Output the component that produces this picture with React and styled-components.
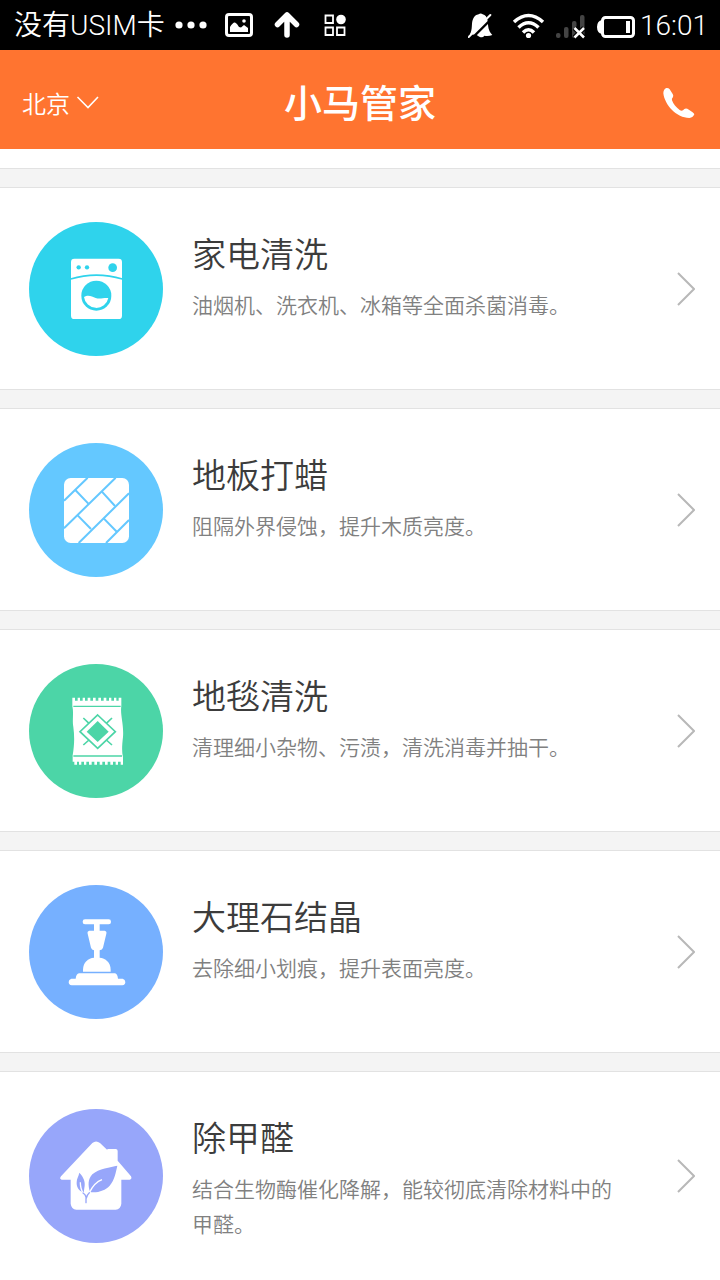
import React from 'react'
import styled, { createGlobalStyle, ThemeProvider } from 'styled-components'

const theme = {
  colors: {
    main: '#ff7430',
    white: '#ffffff',
    background: '#f4f4f4',
    border: '#e2e2e2',
    title: '#3c3c3c',
    text: '#808080',
    arrow: '#b8b8b8',
  },
  fontWeights: {
    light: 350,
    medium: 500,
  },
}

const GlobalStyle = createGlobalStyle`
  * {
    box-sizing: border-box;
  }

  body {
    margin: 0;
    font-family: 'Noto Sans CJK SC', sans-serif;
    font-weight: ${({ theme }) => theme.fontWeights.light};
  }
`

const Screen = styled.div`
  height: 100vh;
  display: flex;
  flex-direction: column;
  background-color: ${({ theme }) => theme.colors.background};
`

const StatusBar = styled.div`
  flex: none;
  height: 50px;
  padding: 0 12px 0 14px;
  display: flex;
  justify-content: space-between;
  align-items: center;
  background-color: #000;
  color: ${({ theme }) => theme.colors.white};
  font-family: Roboto, 'Noto Sans CJK SC', sans-serif;
  font-size: 28px;
  line-height: 32px;
`

const StatusGroup = styled.div`
  display: flex;
  align-items: center;
  gap: ${({ $gap }) => $gap}px;

  & svg {
    display: block;
    flex: none;
  }

  & span,
  & time {
    padding-top: 2px;
  }
`

const Header = styled.header`
  flex: none;
  height: 99px;
  padding: 7px 22px 0;
  display: grid;
  grid-template-columns: 1fr auto 1fr;
  align-items: center;
  background-color: ${({ theme }) => theme.colors.main};
  color: ${({ theme }) => theme.colors.white};

  & button {
    padding: 0;
    border: 0;
    background: none;
    color: inherit;
    font: inherit;
    cursor: pointer;
  }

  & svg {
    display: block;
  }
`

const CityButton = styled.button`
  justify-self: start;
  display: flex;
  align-items: center;
  gap: 6px;

  & span {
    font-size: 24px;
    line-height: 32px;
  }
`

const Logo = styled.h1`
  margin: 0;
  padding-bottom: 4px;
  font-size: 38px;
  line-height: 48px;
  font-weight: ${({ theme }) => theme.fontWeights.medium};
`

const PhoneButton = styled.button`
  justify-self: end;
`

const List = styled.main`
  flex: 1;
  min-height: 0;
  overflow-y: auto;
  scrollbar-width: none;
  display: flex;
  flex-direction: column;
  gap: 18px;
`

const PreviousCard = styled.div`
  flex: none;
  height: 20px;
  background-color: ${({ theme }) => theme.colors.white};
  border-bottom: 1px solid ${({ theme }) => theme.colors.border};
`

const Card = styled.a`
  flex: none;
  min-height: 203px;
  padding: 0 25px 0 29px;
  display: flex;
  align-items: center;
  background-color: ${({ theme }) => theme.colors.white};
  border: solid ${({ theme }) => theme.colors.border};
  border-width: 1px 0;
  color: inherit;
  text-decoration: none;
`

const Badge = styled.span`
  flex: none;
  width: 134px;
  height: 134px;
  border-radius: 50%;
  background-color: ${({ $color }) => $color};
  color: ${({ $color }) => $color};

  & svg {
    display: block;
    width: 100%;
    height: 100%;
  }
`

const CardBody = styled.div`
  flex: 1;
  align-self: flex-start;
  padding: 41px 52px 39px 29px;

  & h2 {
    margin: 0 0 10px;
    font-size: 34px;
    line-height: 48px;
    font-weight: ${({ theme }) => theme.fontWeights.light};
    color: ${({ theme }) => theme.colors.title};
  }

  & p {
    margin: 0;
    font-size: 21px;
    line-height: 35px;
    color: ${({ theme }) => theme.colors.text};
  }
`

const Arrow = styled.svg`
  flex: none;
  width: 18px;
  height: 34px;
  fill: none;
  stroke: ${({ theme }) => theme.colors.arrow};
  stroke-width: 2;
`

const WasherIcon = () => (
  <svg viewBox='27 36 402 402' fill='#fff'>
    <rect x='153' y='146' width='153' height='181' rx='10' />
    <g fill='currentColor'>
      <circle cx='176' cy='172' r='6.5' />
      <circle cx='201' cy='172' r='6.5' />
      <circle cx='278' cy='173' r='13' />
      <circle cx='229' cy='257' r='45' />
    </g>
    <path d='M152 207Q229 184 307 207' fill='none' stroke='currentColor' strokeWidth='5' />
    <path d='M192 261C205 253 216 260 227 264C240 269 252 262 265 264A37 37 0 0 1 192 261Z' />
  </svg>
)

const FloorIcon = () => (
  <svg viewBox='27 23 402 402' fill='#fff'>
    <rect x='132' y='128' width='195' height='195' rx='20' />
    <g stroke='currentColor' strokeWidth='6' fill='none'>
      <path d='M132 196L203 127M132 279L287 127M176 323L327 174M258 323L327 254' />
      <path d='M166 164L205 205M245 168L285 212M173 240L213 281M251 249L291 290' />
    </g>
  </svg>
)

const CarpetIcon = () => (
  <svg viewBox='27 26 402 402' fill='#fff'>
    <path d='M157 127H165V136H173V127H180V136H188V127H195V136H203V127H211V136H219V127H227V136H235V127H243V136H251V127H259V136H267V127H274V136H282V127H289V136H296V127H304V152C300 180 312 205 309 245C306 270 305 290 309 305V328H302V319H294V328H287V319H279V328H271V319H263V328H255V319H247V328H239V319H231V328H223V319H215V328H207V319H199V328H192V319H184V328H177V319H171V328H163V319H158V300C163 270 164 245 160 215C156 195 162 175 157 152Z' />
    <g stroke='currentColor' fill='none'>
      <path d='M160 153H302M160 302H306' strokeWidth='4' />
      <path d='M233 179L286 229L233 279L180 229Z' strokeWidth='5' />
      <path d='M190 188L207 204M276 188L259 204M190 269L207 254M276 269L259 254' strokeWidth='5' />
    </g>
    <path d='M233 197L266 229L233 260L200 229Z' fill='currentColor' />
  </svg>
)

const MarbleIcon = () => (
  <svg viewBox='27 28 402 402' fill='#fff'>
    <rect x='188' y='131' width='85' height='15' rx='7' />
    <path d='M222 144H239V165H254Q261 167 259 174L249 216Q247 223 239 224V248H222V224Q215 223 213 216L203 174Q201 167 208 165H222Z' />
    <path d='M189 288V282C189 260 205 247 222 246H239C256 247 272 260 272 282V288Z' />
    <path d='M177 293H285Q292 294 294 309H308Q316 311 316 319Q316 328 307 329H155Q146 328 146 319Q146 311 154 309H167Q169 294 177 293Z' />
  </svg>
)

const HouseIcon = () => (
  <svg viewBox='27 28 402 402' fill='#fff'>
    <path d='M217 130Q228 121 240 130L262 151V148H287Q293 148 293 154V183L333 230Q337 239 329 240H304V312Q302 328 287 330H169Q154 328 152 312V240H125Q117 238 123 230Z' />
    <g fill='currentColor'>
      <path d='M292 198C272 203 236 206 217 224C203 239 204 258 210 277C232 280 256 273 269 258C284 241 287 219 292 198Z' />
      <path d='M178 219C187 228 196 242 194 258L191 279C177 274 169 263 170 248C170 237 176 229 178 219Z' />
    </g>
    <path d='M208 279C217 261 229 246 246 240M190 281C182 270 181 259 181 248' fill='none' stroke='#fff' strokeWidth='4' />
    <path d='M198 309V292Q196 284 189 280M199 295Q201 285 208 279' fill='none' stroke='currentColor' strokeWidth='4' strokeLinecap='round' />
  </svg>
)

const services = [
  { name: '家电清洗', text: '油烟机、洗衣机、冰箱等全面杀菌消毒。', color: '#2fd3ec', Icon: WasherIcon },
  { name: '地板打蜡', text: '阻隔外界侵蚀，提升木质亮度。', color: '#64c8ff', Icon: FloorIcon },
  { name: '地毯清洗', text: '清理细小杂物、污渍，清洗消毒并抽干。', color: '#4cd5a7', Icon: CarpetIcon },
  { name: '大理石结晶', text: '去除细小划痕，提升表面亮度。', color: '#76b0ff', Icon: MarbleIcon },
  { name: '除甲醛', text: '结合生物酶催化降解，能较彻底清除材料中的甲醛。', color: '#97a6fa', Icon: HouseIcon },
]

const StatusIcons = () => (
  <>
    <svg width='32' height='32' fill='#fff'>
      <circle cx='4' cy='16' r='3.6' />
      <circle cx='16' cy='16' r='3.6' />
      <circle cx='28' cy='16' r='3.6' />
    </svg>
    <svg width='32' height='32' fill='#fff'>
      <rect x='3.5' y='5.5' width='25' height='21' rx='2.5' fill='none' stroke='#fff' strokeWidth='3' />
      <circle cx='21' cy='12' r='1.8' />
      <path d='M7 23V18Q10 13 12 13.500Q14 14 16 18L18 18.500L21 16L25 19V23Z' />
    </svg>
    <svg width='32' height='32' fill='none' stroke='#fff' strokeWidth='5.5' strokeLinecap='round' strokeLinejoin='round'>
      <path d='M16 26V7M6.500 15.500L16 6L25.500 15.500' />
    </svg>
    <svg width='32' height='32' fill='none' stroke='#fff' strokeWidth='1.8'>
      <path d='M6.500 6.500H14V14H6.500ZM6.500 18.500H14V26H6.500ZM18 18.500H25.500V26H18Z' />
      <circle cx='22' cy='10.500' r='4.8' fill='#fff' stroke='none' />
    </svg>
  </>
)

const SignalIcons = () => (
  <>
    <svg width='32' height='32' viewBox='30 12 96 96' fill='#fff'>
      <path d='M36 88C44 72 40 56 44 45C49 32 56 29 62 28Q68 23 74 28C82 30 87 36 89 48C91 66 90 76 103 90Q92 94 79 92Q74 100 64 95L56 90Z' />
      <path d='M32 96L97 30' stroke='#fff' strokeWidth='6' strokeLinecap='round' />
      <path d='M38 104L106 36' stroke='#000' strokeWidth='7' />
    </svg>
    <svg width='36' height='32' fill='none' stroke='#fff' strokeWidth='3.5'>
      <path d='M4 13Q18.500 0 33 13M8.500 18.500Q18.500 9 28.500 18.500M13 23.500Q18.500 18 24 23.500' />
      <circle cx='18.500' cy='26.500' r='2.6' fill='#fff' stroke='none' />
    </svg>
    <svg width='30' height='32' fill='#444'>
      <rect x='0' y='24' width='4.500' height='5' rx='2' />
      <rect x='8' y='18' width='4.500' height='11' rx='2' />
      <rect x='16' y='12' width='4.500' height='17' rx='2' />
      <rect x='24' y='6' width='4.500' height='23' rx='2' />
      <path d='M18.500 19L28 28.500M28 19L18.500 28.500' stroke='#000' strokeWidth='5' />
      <path d='M18.500 19L28 28.500M28 19L18.500 28.500' stroke='#fff' strokeWidth='2.500' />
    </svg>
  </>
)

const BatteryIcon = () => (
  <svg width='40' height='32' fill='#fff'>
    <rect x='6.500' y='8.500' width='31' height='19' rx='3' fill='none' stroke='#fff' strokeWidth='3' />
    <path d='M6 11Q1 12 1 18Q1 24 6 25Z' />
    <rect x='30' y='12' width='4' height='12' />
  </svg>
)

const App = () => {
  return (
    <ThemeProvider theme={theme}>
      <GlobalStyle />
      <Screen>
        <StatusBar>
          <StatusGroup $gap={10}>
            <span>没有USIM卡</span>
            <StatusGroup $gap={16}>
              <StatusIcons />
            </StatusGroup>
          </StatusGroup>
          <StatusGroup $gap={10}>
            <SignalIcons />
            <StatusGroup $gap={4}>
              <BatteryIcon />
              <time>16:01</time>
            </StatusGroup>
          </StatusGroup>
        </StatusBar>
        <Header>
          <CityButton type='button'>
            <span>北京</span>
            <svg width='24' height='16' fill='none' stroke='#fff' strokeWidth='1.6'>
              <path d='M1.500 2L12 12.500L22 2' />
            </svg>
          </CityButton>
          <Logo>小马管家</Logo>
          <PhoneButton type='button' aria-label='电话'>
            <svg width='36' height='36' viewBox='904 256 108 108' fill='#fff'>
              <path d='M917 265Q908 269 908 281C912 316 948 355 986 355Q998 353 1001 344Q1001 340 980 327Q972 324 967 332Q962 335 957 331C946 323 938 313 934 302Q932 297 937 292Q939 288 936 283L927 269Q923 264 917 265Z' />
            </svg>
          </PhoneButton>
        </Header>
        <List>
          <PreviousCard />
          {services.map(({ name, text, color, Icon }) => (
            <Card key={name} href='#'>
              <Badge $color={color}>
                <Icon />
              </Badge>
              <CardBody>
                <h2>{name}</h2>
                <p>{text}</p>
              </CardBody>
              <Arrow viewBox='0 0 18 34'>
                <path d='M1 1L17 17L1 33' />
              </Arrow>
            </Card>
          ))}
        </List>
      </Screen>
    </ThemeProvider>
  )
}

export default App
